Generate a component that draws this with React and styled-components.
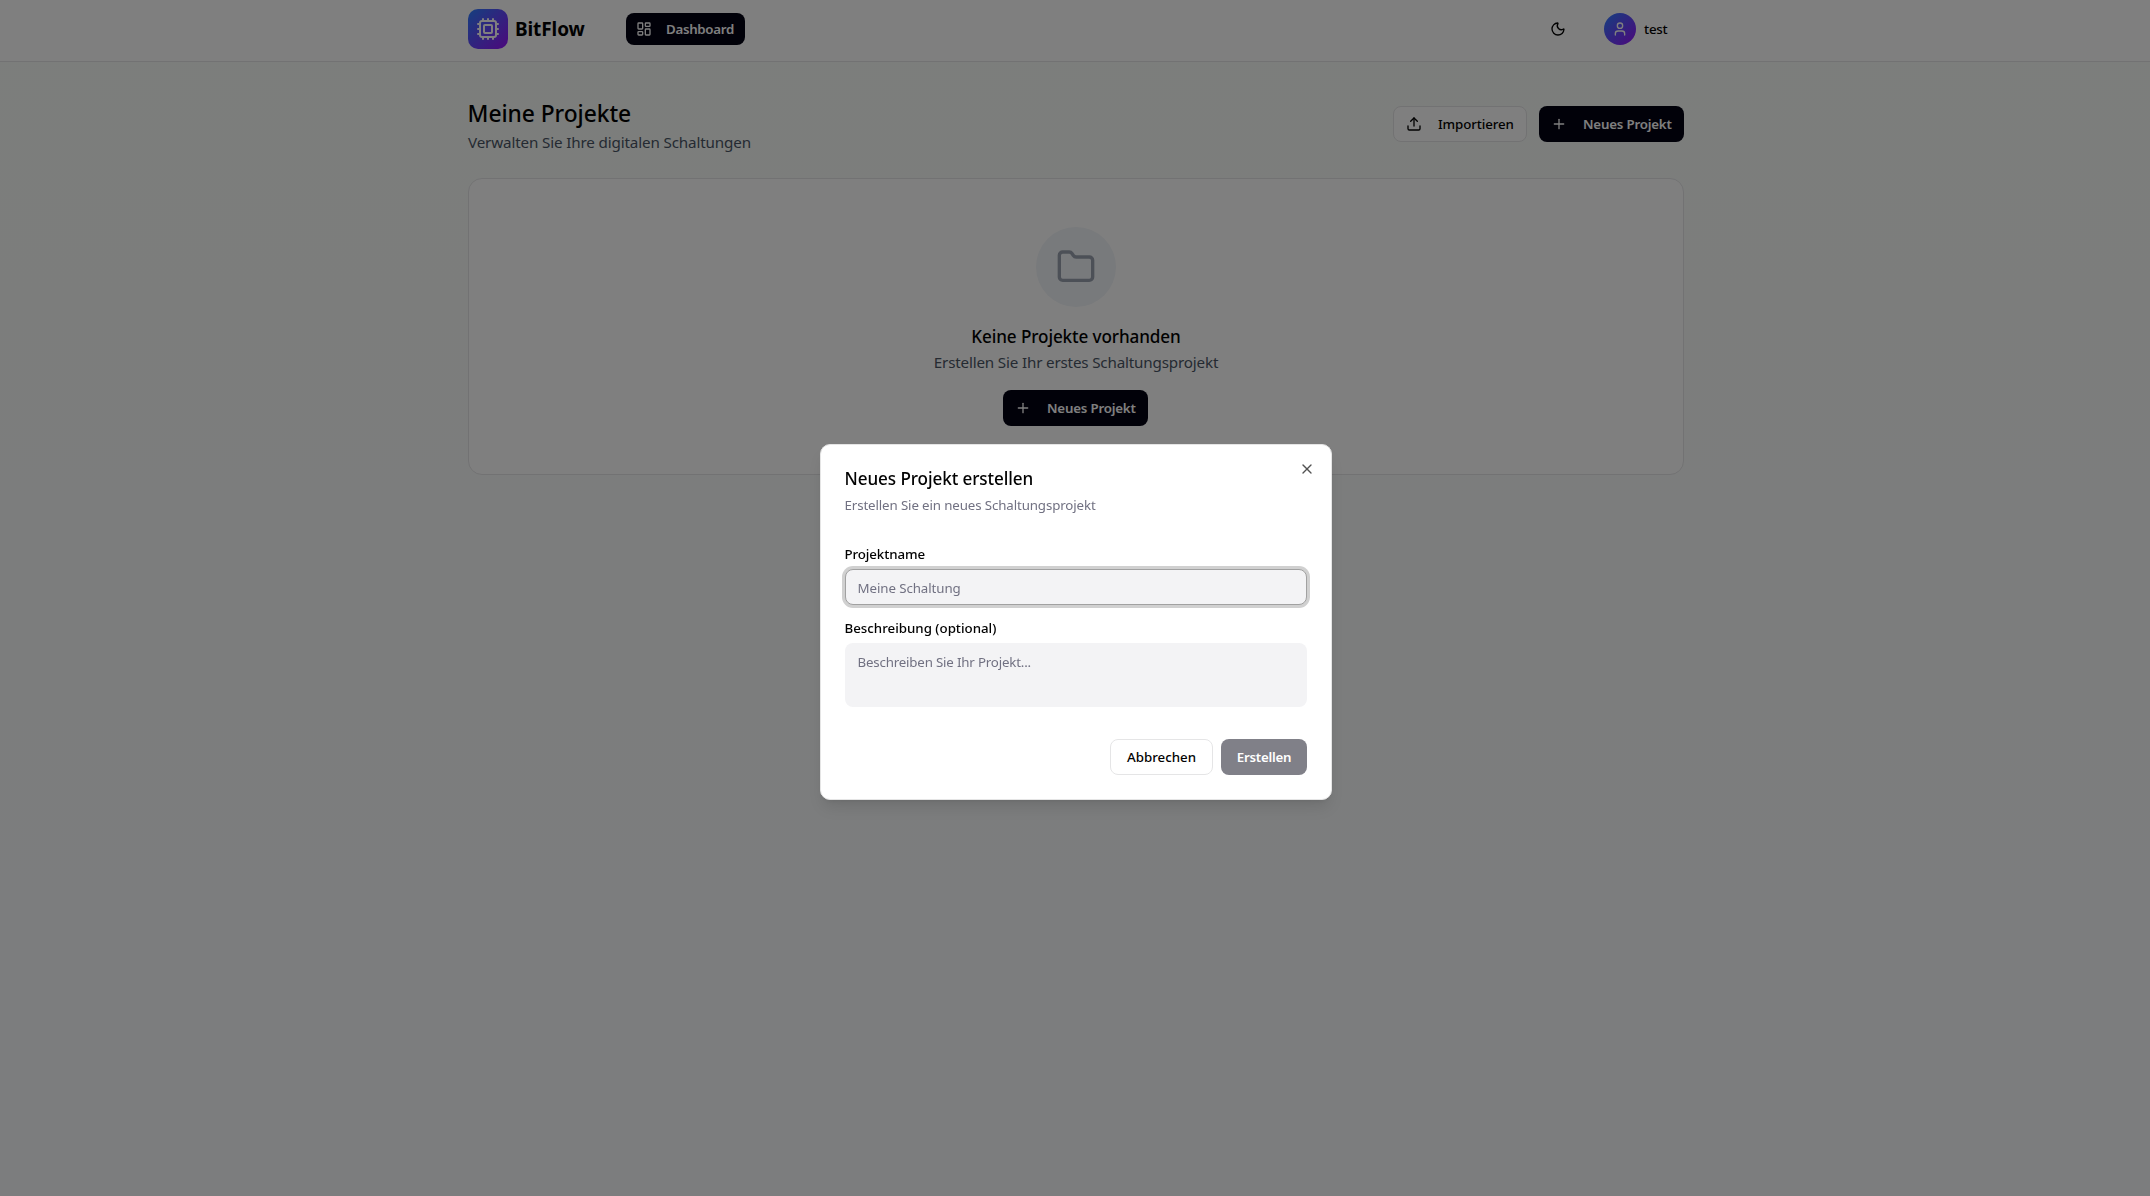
import React from 'react';
import styled, { createGlobalStyle, css } from 'styled-components';
import { Cpu, LayoutDashboard, Moon, User, Upload, Plus, Folder, X } from 'lucide-react';

const GlobalStyle = createGlobalStyle`
  *, *::before, *::after { box-sizing: border-box; }
  body {
    margin: 0;
    overflow: hidden;
    font-family: "Noto Sans", "Open Sans", sans-serif;
    color: #020202;
  }
  h1, h2, h3, p { margin: 0; }
  button, input, textarea { font-family: inherit; }
`;

const Page = styled.div`
  min-height: 100vh;
  background: linear-gradient(180deg, #f8fcf9 0%, #f8fbf9 25%, #f8fafc 75%, #f9fafc 100%);
`;

const Header = styled.header`
  height: 62px;
  padding: 9px 0 12px;
  background: #fff;
  border-bottom: 1px solid #e5e5e7;
`;

const Container = styled.div`
  width: 1216px;
  margin-left: 468px;
`;

const HeaderRow = styled(Container)`
  display: flex;
  align-items: center;
  justify-content: space-between;
`;

const HeaderGroup = styled.div`
  display: flex;
  align-items: center;
  gap: ${(p) => p.$gap}px;
`;

const Brand = styled.div`
  width: 118px;
  display: flex;
  align-items: center;
  gap: 7px;
  font-size: 19px;
  line-height: 28px;
  font-weight: 700;
  letter-spacing: -0.1px;
`;

const brandFill = css`
  display: flex;
  align-items: center;
  justify-content: center;
  color: #fff;
  background: linear-gradient(135deg, #2b7fff, #9810fa);
`;

const LogoTile = styled.span`
  ${brandFill}
  width: 40px;
  height: 40px;
  border-radius: 10px;
`;

const Avatar = styled.span`
  ${brandFill}
  width: 32px;
  height: 32px;
  border-radius: 50%;
`;

const Button = styled.button`
  display: inline-flex;
  align-items: center;
  justify-content: ${(p) => (p.$center ? 'center' : 'flex-start')};
  flex-shrink: 0;
  gap: ${(p) => p.$gap ?? 16}px;
  width: ${(p) => p.$width}px;
  height: ${(p) => p.$height ?? 36}px;
  padding: 0 ${(p) => (p.$center ? 0 : p.$pad ?? 12)}px;
  border: ${(p) => (p.$outline ? '1px solid #e5e5e6' : '0')};
  border-radius: 8px;
  background: ${(p) => (p.$outline ? '#fff' : '#030213')};
  color: ${(p) => (p.$outline ? '#020202' : '#fff')};
  font-size: 13.3px;
  line-height: 20px;
  font-weight: ${(p) => (p.$outline ? 500 : 600)};
  letter-spacing: ${(p) => p.$tracking ?? 0}px;
  white-space: nowrap;
  &:disabled { opacity: 0.5; }
`;

const UserActions = styled.div`
  display: flex;
  align-items: center;
  padding-right: 16px;
  font-size: 13.3px;
  line-height: 20px;
  font-weight: 500;
  letter-spacing: -0.2px;
`;

const ThemeToggle = styled.span`
  display: flex;
  margin-right: 38px;
`;

const UserName = styled.span`
  width: 24px;
  margin-left: 8px;
`;

const Main = styled(Container).attrs({ as: 'main' })`
  padding-top: 32px;
`;

const PageHead = styled.div`
  display: flex;
  align-items: center;
  justify-content: space-between;
  margin-bottom: 24px;
`;

const PageTitle = styled.h1`
  padding-top: 4px;
  font-size: 22.8px;
  line-height: 32px;
  font-weight: 500;
  letter-spacing: -0.05px;
  text-indent: -0.5px;
`;

const Muted = styled.p`
  color: #4a5565;
  font-size: 15.2px;
  line-height: 24px;
  letter-spacing: ${(p) => p.$tracking}px;
`;

const EmptyCard = styled.section`
  display: flex;
  flex-direction: column;
  align-items: center;
  padding: 48px;
  border: 1px solid #e5e5e7;
  border-radius: 14px;
  background: #fff;
`;

const FolderCircle = styled.div`
  display: flex;
  align-items: center;
  justify-content: center;
  width: 80px;
  height: 80px;
  margin-bottom: 16px;
  border-radius: 50%;
  background: #f1f4f8;
  color: #99a1af;
`;

const EmptyTitle = styled.h3`
  font-size: 17.1px;
  line-height: 27px;
  font-weight: 500;
  letter-spacing: -0.1px;
`;

const EmptyAction = styled.div`
  display: flex;
  margin-top: 16px;
  padding-right: 1px;
`;

const Overlay = styled.div`
  position: fixed;
  inset: 0;
  background: rgba(0, 0, 0, 0.5);
`;

const Dialog = styled.div`
  position: absolute;
  top: 444px;
  left: 820px;
  width: 512px;
  height: 356px;
  padding: 24px;
  border: 1px solid #e5e5e5;
  border-radius: 10px;
  background: #fff;
  box-shadow: 0 10px 15px -3px rgba(0, 0, 0, 0.1), 0 4px 6px -4px rgba(0, 0, 0, 0.1);
`;

const DialogTitle = styled.h2`
  padding-top: 2px;
  font-size: 17.1px;
  line-height: 16px;
  font-weight: 500;
  letter-spacing: -0.08px;
  text-indent: -0.5px;
`;

const DialogText = styled.p`
  margin: 8px 0 32px;
  color: #717182;
  font-size: 13.3px;
  line-height: 20px;
  letter-spacing: -0.12px;
  text-indent: -0.5px;
`;

const Field = styled.div`
  display: flex;
  flex-direction: column;
  gap: 8px;
  margin-bottom: ${(p) => p.$after}px;
`;

const Label = styled.label`
  font-size: 13.3px;
  line-height: 14px;
  font-weight: 500;
  letter-spacing: ${(p) => p.$tracking}px;
  text-indent: -0.5px;
`;

const control = css`
  display: block;
  width: 100%;
  border: 1px solid transparent;
  border-radius: 8px;
  outline: none;
  background: #f3f3f5;
  font-size: 13.3px;
  line-height: 20px;
  &::placeholder { color: #717182; opacity: 1; }
`;

const Input = styled.input`
  ${control}
  height: 36px;
  padding: 6px 11.5px 4px;
  border-color: #a1a1a1;
  box-shadow: 0 0 0 3px #d0d0d0;
  letter-spacing: -0.08px;
`;

const Textarea = styled.textarea`
  ${control}
  height: 64px;
  padding: 8px 11.5px;
  resize: none;
  letter-spacing: -0.18px;
`;

const DialogFooter = styled.div`
  display: flex;
  justify-content: flex-end;
  gap: 8px;
`;

const CloseButton = styled.button`
  position: absolute;
  top: 16px;
  right: 16px;
  display: flex;
  padding: 0;
  border: 0;
  background: none;
  color: #0a0a0a;
  opacity: 0.7;
`;

function NewProjectButton() {
  return (
    <Button $width={145} $tracking={-0.2}>
      <Plus size={16} />
      Neues Projekt
    </Button>
  );
}

export default function App() {
  return (
    <>
      <GlobalStyle />
      <Page>
        <Header>
          <HeaderRow>
            <HeaderGroup $gap={40}>
              <Brand>
                <LogoTile><Cpu size={24} /></LogoTile>
                BitFlow
              </Brand>
              <Button $width={119} $height={32} $pad={10} $gap={14} $tracking={-0.3}>
                <LayoutDashboard size={16} />
                Dashboard
              </Button>
            </HeaderGroup>
            <UserActions>
              <ThemeToggle><Moon size={16} /></ThemeToggle>
              <Avatar><User size={16} /></Avatar>
              <UserName>test</UserName>
            </UserActions>
          </HeaderRow>
        </Header>
        <Main>
          <PageHead>
            <div>
              <PageTitle>Meine Projekte</PageTitle>
              <Muted $tracking={-0.14}>Verwalten Sie Ihre digitalen Schaltungen</Muted>
            </div>
            <HeaderGroup $gap={12}>
              <Button $outline $width={134} $tracking={-0.1}>
                <Upload size={16} />
                Importieren
              </Button>
              <NewProjectButton />
            </HeaderGroup>
          </PageHead>
          <EmptyCard>
            <FolderCircle><Folder size={40} /></FolderCircle>
            <EmptyTitle>Keine Projekte vorhanden</EmptyTitle>
            <Muted $tracking={-0.17}>Erstellen Sie Ihr erstes Schaltungsprojekt</Muted>
            <EmptyAction><NewProjectButton /></EmptyAction>
          </EmptyCard>
        </Main>
      </Page>
      <Overlay />
      <Dialog role="dialog">
        <DialogTitle>Neues Projekt erstellen</DialogTitle>
        <DialogText>Erstellen Sie ein neues Schaltungsprojekt</DialogText>
        <Field $after={16}>
          <Label $tracking={-0.1}>Projektname</Label>
          <Input placeholder="Meine Schaltung" />
        </Field>
        <Field $after={32}>
          <Label $tracking={0}>Beschreibung (optional)</Label>
          <Textarea placeholder="Beschreiben Sie Ihr Projekt..." />
        </Field>
        <DialogFooter>
          <Button $outline $center $width={103}>Abbrechen</Button>
          <Button disabled $center $width={86} $tracking={-0.25}>Erstellen</Button>
        </DialogFooter>
        <CloseButton aria-label="Schließen"><X size={16} /></CloseButton>
      </Dialog>
    </>
  );
}
